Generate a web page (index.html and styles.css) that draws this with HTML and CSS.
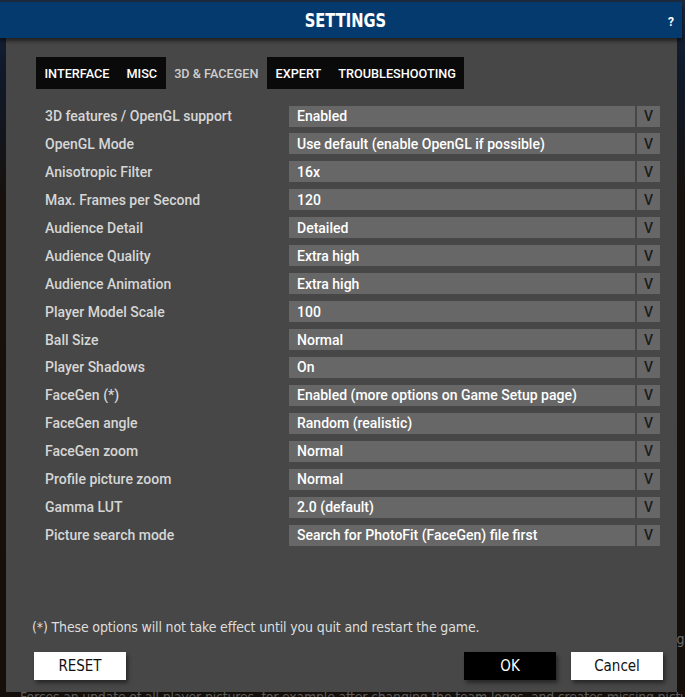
FILE: index.html
```html
<!DOCTYPE html>
<html lang="en">

<head>
    <meta charset="UTF-8">
    <meta name="viewport" content="width=device-width, initial-scale=1.0">
    <title>Settings</title>
    <link rel="stylesheet" href="styles.css">
</head>

<body>
    <div class="backdrop">
        <div class="bg-side">Update player pictures and settings</div>
        <div class="bg-bottom">Forces an update of all player pictures, for example after changing the team logos, and creates missing pictures.</div>
    </div>

    <div class="dialog">
        <div class="header">
            <h1>SETTINGS</h1>
            <span class="help">?</span>
        </div>
        <div class="panel">
            <div class="tabs">
                <div class="tab-group">
                    <span class="tab">INTERFACE</span>
                    <span class="tab">MISC</span>
                </div>
                <span class="tab active">3D &amp; FACEGEN</span>
                <div class="tab-group">
                    <span class="tab">EXPERT</span>
                    <span class="tab">TROUBLESHOOTING</span>
                </div>
            </div>

            <div class="rows">
                <div class="row"><span class="label">3D features / OpenGL support</span><span class="select">Enabled</span><span class="arrow">V</span></div>
                <div class="row"><span class="label">OpenGL Mode</span><span class="select">Use default (enable OpenGL if possible)</span><span class="arrow">V</span></div>
                <div class="row"><span class="label">Anisotropic Filter</span><span class="select">16x</span><span class="arrow">V</span></div>
                <div class="row"><span class="label">Max. Frames per Second</span><span class="select">120</span><span class="arrow">V</span></div>
                <div class="row"><span class="label">Audience Detail</span><span class="select">Detailed</span><span class="arrow">V</span></div>
                <div class="row"><span class="label">Audience Quality</span><span class="select">Extra high</span><span class="arrow">V</span></div>
                <div class="row"><span class="label">Audience Animation</span><span class="select">Extra high</span><span class="arrow">V</span></div>
                <div class="row"><span class="label">Player Model Scale</span><span class="select">100</span><span class="arrow">V</span></div>
                <div class="row"><span class="label">Ball Size</span><span class="select">Normal</span><span class="arrow">V</span></div>
                <div class="row"><span class="label">Player Shadows</span><span class="select">On</span><span class="arrow">V</span></div>
                <div class="row"><span class="label">FaceGen (*)</span><span class="select">Enabled (more options on Game Setup page)</span><span class="arrow">V</span></div>
                <div class="row"><span class="label">FaceGen angle</span><span class="select">Random (realistic)</span><span class="arrow">V</span></div>
                <div class="row"><span class="label">FaceGen zoom</span><span class="select">Normal</span><span class="arrow">V</span></div>
                <div class="row"><span class="label">Profile picture zoom</span><span class="select">Normal</span><span class="arrow">V</span></div>
                <div class="row"><span class="label">Gamma LUT</span><span class="select">2.0 (default)</span><span class="arrow">V</span></div>
                <div class="row"><span class="label">Picture search mode</span><span class="select">Search for PhotoFit (FaceGen) file first</span><span class="arrow">V</span></div>
            </div>

            <p class="note">(*) These options will not take effect until you quit and restart the game.</p>

            <div class="buttons">
                <button class="btn light">RESET</button>
                <div class="right">
                    <button class="btn dark">OK</button>
                    <button class="btn light">Cancel</button>
                </div>
            </div>
        </div>
    </div>
</body>

</html>
```

FILE: styles.css
```css
body {
    margin: 0;
    padding: 0;
    width: 685px;
    height: 697px;
    overflow: hidden;
    position: relative;
    font-family: Roboto, "Noto Sans", sans-serif;
    background: linear-gradient(180deg, #1d2a3d 0px, #0f1a2c 60px, #17110d 200px, #140f0b 100%);
}

.backdrop {
    position: absolute;
    inset: 0;
    z-index: 0;
}

.bg-side {
    position: absolute;
    top: 631px;
    right: -6px;
    font-family: "DejaVu Sans Condensed", sans-serif;
    font-size: 14px;
    color: #6b6b6b;
}

.bg-bottom {
    position: absolute;
    top: 689px;
    left: 20px;
    white-space: nowrap;
    font-family: "DejaVu Sans Condensed", sans-serif;
    font-size: 14px;
    letter-spacing: -0.2px;
    color: #5c5c5c;
}

.dialog {
    position: relative;
    z-index: 1;
    padding-top: 2px;
    width: 682px;
}

.header {
    height: 36px;
    background: #053a6e;
    display: flex;
    justify-content: center;
    align-items: center;
    position: relative;
    box-shadow: 0 3px 4px rgba(0, 0, 0, 0.55);
    z-index: 2;
    padding-left: 8px;
}

h1 {
    margin: 0;
    font-family: "DejaVu Sans Condensed", sans-serif;
    font-size: 19px;
    font-weight: bold;
    color: white;
    transform: scaleX(0.86);
}

.help {
    position: absolute;
    right: 8px;
    top: 13px;
    font-size: 12px;
    font-weight: bold;
    color: white;
}

.panel {
    margin-left: 6px;
    width: 671px;
    height: 654px;
    background: #464746;
    box-sizing: border-box;
    padding: 19px 17px 12px 30px;
    display: flex;
    flex-direction: column;
}

.tabs {
    display: flex;
    height: 32px;
}

.tab-group {
    display: flex;
    background: #0a0a0a;
}

.tab {
    display: flex;
    align-items: center;
    padding: 0 8.5px;
    font-size: 12.7px;
    font-weight: 500;
    color: white;
}

.tab.active {
    color: #cfcfcf;
}

.rows {
    display: flex;
    flex-direction: column;
    gap: 6.95px;
    margin-top: 16.5px;
    margin-left: 9px;
}

.row {
    display: flex;
    height: 21px;
    align-items: stretch;
}

.label {
    width: 244px;
    display: flex;
    align-items: center;
    font-size: 14px;
    font-weight: 500;
    color: #d6d6d6;
}

.select {
    width: 346px;
    background: #676767;
    display: flex;
    align-items: center;
    padding-left: 8px;
    box-sizing: border-box;
    font-size: 14px;
    font-weight: 500;
    color: white;
}

.arrow {
    width: 23px;
    margin-left: 2px;
    background: #676767;
    display: flex;
    justify-content: center;
    align-items: center;
    font-size: 14px;
    font-weight: 500;
    color: #1c1c1c;
}

.note {
    margin: auto 0 0 -4px;
    font-family: "DejaVu Sans Condensed", sans-serif;
    font-size: 14px;
    letter-spacing: -0.15px;
    color: #dedede;
}

.buttons {
    display: flex;
    justify-content: space-between;
    margin-top: 17px;
    margin-left: -2px;
    margin-right: -3px;
}

.right {
    display: flex;
    gap: 15px;
}

.btn {
    width: 92px;
    height: 28px;
    border: none;
    border-radius: 0;
    font-family: "DejaVu Sans Condensed", sans-serif;
    font-size: 15px;
    cursor: pointer;
    box-shadow: 2px 3px 4px rgba(0, 0, 0, 0.45);
}

.btn.light {
    background: white;
    color: #111;
}

.btn.dark {
    background: #000;
    color: white;
}
```
